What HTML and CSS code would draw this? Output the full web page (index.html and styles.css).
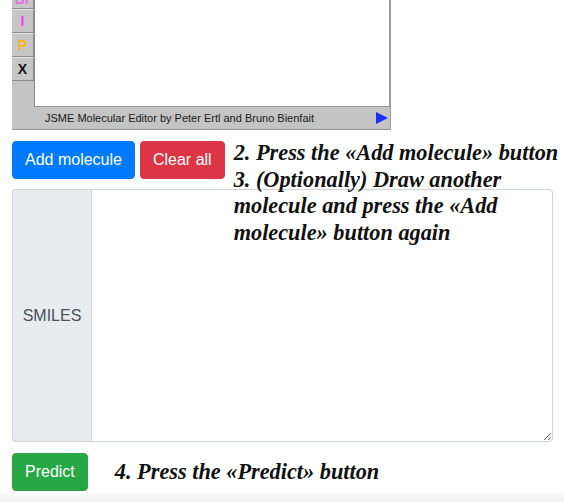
FILE: index.html
```html
<!DOCTYPE html>
<html>
<head>
<meta charset="utf-8">
<link rel="stylesheet" href="styles.css">
</head>
<body>
<div class="page">
  <div class="jsme">
    <div class="jsme-main">
      <div class="tools">
        <div class="tool tool-top"><span class="el-br">Br</span></div>
        <div class="tool"><span class="el-i">I</span></div>
        <div class="tool"><span class="el-p">P</span></div>
        <div class="tool"><span class="el-x">X</span></div>
      </div>
      <div class="canvas"></div>
    </div>
    <div class="status">
      <span class="status-text">JSME Molecular Editor by Peter Ertl and Bruno Bienfait</span>
      <svg class="arrow" width="12" height="12" viewBox="0 0 12 12"><polygon points="0,0 12,6 0,12" fill="#1f2dff"/></svg>
    </div>
  </div>

  <div class="actions">
    <button class="btn btn-blue">Add molecule</button>
    <button class="btn btn-red">Clear all</button>
    <div class="steps">
      <p class="step">2. Press the «Add molecule» button</p>
      <p class="step">3. (Optionally) Draw another<br>molecule and press the «Add<br>molecule» button again</p>
    </div>
  </div>

  <div class="input-group">
    <div class="addon">SMILES</div>
    <textarea class="smiles"></textarea>
  </div>

  <div class="predict-row">
    <button class="btn btn-green">Predict</button>
    <p class="step step-4">4. Press the «Predict» button</p>
  </div>
</div>
<div class="fade"></div>
</body>
</html>
```

FILE: styles.css
```css
html, body {
  margin: 0;
  padding: 0;
  background: #ffffff;
}

.page {
  padding: 0 12px;
  font-family: "Liberation Sans", Arial, sans-serif;
}

/* JSME editor */
.jsme {
  width: 379px;
  background: #c4c4c4;
  display: flex;
  flex-direction: column;
}

.jsme-main {
  display: flex;
  height: 107px;
}

.tools {
  width: 22px;
  display: flex;
  flex-direction: column;
  background: #c4c4c4;
}

.tool {
  height: 22px;
  border-top: 1px solid #e2e2e2;
  border-bottom: 1px solid #8e8e8e;
  border-right: 1px solid #8e8e8e;
  background: #c6c6c6;
  display: flex;
  align-items: center;
  justify-content: center;
  font-weight: bold;
  font-size: 14px;
  line-height: 1;
}

.tool-top {
  height: 8px;
  border-top: none;
  align-items: flex-end;
  overflow: hidden;
}

.el-br { color: #e070e0; transform: translateY(-2px); }
.el-i { color: #f03cf0; }
.el-p { color: #ffb31a; }
.el-x { color: #111111; }

.canvas {
  flex: 1;
  background: #ffffff;
  border-left: 1px solid #8a8a8a;
  border-right: 2px solid #9a9a9a;
  border-bottom: 1px solid #9a9a9a;
}

.status {
  height: 22px;
  display: flex;
  align-items: center;
  justify-content: space-between;
  padding: 0 2px 0 33px;
  border-bottom: 1px solid #9a9a9a;
  border-right: 1px solid #9a9a9a;
  font-size: 11px;
  color: #1a1a1a;
}

.arrow {
  display: block;
}

/* Buttons row */
.actions {
  display: flex;
  align-items: flex-start;
  margin-top: 11px;
  height: 38px;
}

.btn {
  flex-shrink: 0;
  white-space: nowrap;
  font-family: "Liberation Sans", Arial, sans-serif;
  font-size: 16px;
  line-height: 24px;
  padding: 6px 12px;
  border: 1px solid transparent;
  border-radius: 4px;
  color: #ffffff;
  cursor: pointer;
}

.btn-blue { background: #007bff; border-color: #007bff; }
.btn-red { background: #dc3545; border-color: #dc3545; margin-left: 5px; }
.btn-green { background: #28a745; border-color: #28a745; }

.steps {
  position: relative;
  z-index: 1;
  flex-shrink: 0;
  margin-left: 9px;
  margin-top: -1px;
}

.step {
  margin: 0;
  font-family: "Liberation Serif", "Times New Roman", serif;
  font-style: italic;
  font-weight: bold;
  font-size: 22.3px;
  line-height: 26.7px;
  color: #111111;
  white-space: nowrap;
}

/* SMILES input group */
.input-group {
  display: flex;
  width: 541px;
  height: 253px;
  margin-top: 10px;
}

.addon {
  width: 78px;
  display: flex;
  align-items: center;
  justify-content: center;
  background: #e9ecef;
  border: 1px solid #ced4da;
  border-right: none;
  border-radius: 4px 0 0 4px;
  color: #495057;
  font-size: 16px;
}

.smiles {
  flex: 1;
  margin: 0;
  border: 1px solid #ced4da;
  border-radius: 0 4px 4px 0;
  background: #ffffff;
  font-family: "Liberation Sans", Arial, sans-serif;
  font-size: 16px;
  padding: 6px 12px;
  resize: both;
}

/* Predict row */
.predict-row {
  display: flex;
  align-items: center;
  margin-top: 11px;
}

.step-4 {
  margin-left: 27px;
  margin-top: 1px;
}

.fade {
  position: fixed;
  left: 0;
  right: 0;
  bottom: 0;
  height: 12px;
  background: linear-gradient(rgba(0,0,0,0), rgba(0,0,0,0.06));
  pointer-events: none;
}
```
